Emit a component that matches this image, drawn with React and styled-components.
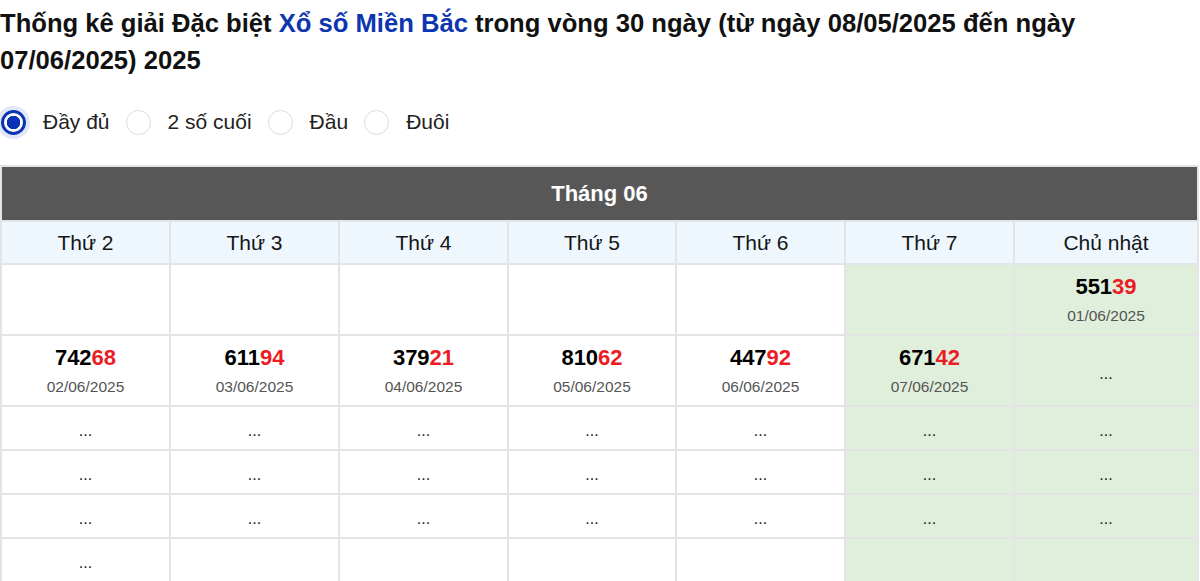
import { useState } from "react";
import styled, { createGlobalStyle } from "styled-components";

const GlobalStyle = createGlobalStyle`
  body {
    margin: 0;
    background: #fff;
    font-family: "Liberation Sans", Arial, sans-serif;
    color: #111;
  }
`;

const modes = ["Đầy đủ", "2 số cuối", "Đầu", "Đuôi"];
const days = ["Thứ 2", "Thứ 3", "Thứ 4", "Thứ 5", "Thứ 6", "Thứ 7", "Chủ nhật"];
const colWidths = [169, 169, 169, 168, 169, 169, null];

// each row: 7 cells, null = empty, "..." = no data, object = result
const rows = [
  [null, null, null, null, null, null, { n: "55139", d: "01/06/2025" }],
  [
    { n: "74268", d: "02/06/2025" },
    { n: "61194", d: "03/06/2025" },
    { n: "37921", d: "04/06/2025" },
    { n: "81062", d: "05/06/2025" },
    { n: "44792", d: "06/06/2025" },
    { n: "67142", d: "07/06/2025" },
    "...",
  ],
  ["...", "...", "...", "...", "...", "...", "..."],
  ["...", "...", "...", "...", "...", "...", "..."],
  ["...", "...", "...", "...", "...", "...", "..."],
  ["...", null, null, null, null, null, null],
];

export default function App() {
  const [mode, setMode] = useState(0);

  return (
    <Page>
      <GlobalStyle />
      <Title>
        Thống kê giải Đặc biệt <TitleLink>Xổ số Miền Bắc</TitleLink> trong vòng 30 ngày (từ ngày
        08/05/2025 đến ngày 07/06/2025) 2025
      </Title>

      <Options>
        {modes.map((m, i) => (
          <Option key={m}>
            <Radio type="radio" name="mode" checked={mode === i} onChange={() => setMode(i)} />
            {m}
          </Option>
        ))}
      </Options>

      <Table>
        <colgroup>
          {days.map((d, i) => (
            <Col key={d} $width={colWidths[i]} />
          ))}
        </colgroup>
        <thead>
          <tr>
            <MonthCell colSpan={7}>Tháng 06</MonthCell>
          </tr>
          <tr>
            {days.map((d) => (
              <DayCell key={d}>{d}</DayCell>
            ))}
          </tr>
        </thead>
        <tbody>
          {rows.map((row, r) => (
            <BodyRow key={r} $tall={r < 2}>
              {row.map((c, i) => (
                <Cell key={i} $weekend={i >= 5}>
                  {c === "..." && <Dots>...</Dots>}
                  {c && c.n && (
                    <>
                      <Number>
                        {c.n.slice(0, 3)}
                        <Tail>{c.n.slice(3)}</Tail>
                      </Number>
                      <DateText>{c.d}</DateText>
                    </>
                  )}
                </Cell>
              ))}
            </BodyRow>
          ))}
        </tbody>
      </Table>
    </Page>
  );
}

const Page = styled.div`
  width: 1200px;
`;

const Title = styled.h2`
  margin: 0;
  padding-top: 5px;
  font-size: 25.6px;
  line-height: 37px;
  font-weight: 700;
  color: #111;
`;

const TitleLink = styled.a`
  color: #0d35b0;
  text-decoration: none;
`;

const Options = styled.div`
  display: flex;
  align-items: center;
  margin-top: 28px;
  height: 30px;
`;

const Option = styled.label`
  display: flex;
  align-items: center;
  gap: 17px;
  margin-right: 15px;
  font-size: 21px;
  color: #222;
`;

const Radio = styled.input`
  appearance: none;
  margin: 0 0 0 1px;
  width: 25px;
  height: 25px;
  border-radius: 50%;
  border: 1px solid #dcdde0;
  background: #fff;
  &:checked {
    border: 3px solid #0b33b5;
    background: radial-gradient(circle, #0b33b5 0 6.5px, #fff 7px);
    box-shadow: 0 0 0 4px rgba(13, 60, 200, 0.12);
  }
`;

const Table = styled.table`
  margin-top: 28px;
  width: 1199px;
  border-collapse: collapse;
  table-layout: fixed;
  text-align: center;
`;

const Col = styled.col`
  width: ${(p) => (p.$width ? `${p.$width}px` : "auto")};
`;

const MonthCell = styled.th`
  background: #575757;
  color: #fff;
  height: 53px;
  padding: 0;
  font-size: 22px;
  font-weight: 700;
  border: 2px solid #e3e4e6;
  border-bottom: 1px solid #e3e4e6;
`;

const DayCell = styled.th`
  background: #eef6fe;
  height: 41px;
  padding: 0;
  font-size: 21px;
  font-weight: 400;
  color: #151515;
  border: 2px solid #e3e4e6;
`;

const BodyRow = styled.tr`
  height: ${(p) => (p.$tall ? "71px" : "44px")};
`;

const Cell = styled.td`
  padding: 0;
  vertical-align: middle;
  border: 2px solid #e3e4e6;
  background: ${(p) => (p.$weekend ? "#e0efdb" : "#fff")};
`;

const Number = styled.div`
  font-size: 22px;
  font-weight: 700;
  line-height: 28px;
  color: #000;
`;

const Tail = styled.span`
  color: #ec1c24;
`;

const DateText = styled.div`
  margin-top: 5px;
  font-size: 15.5px;
  line-height: 20px;
  color: #555;
`;

const Dots = styled.div`
  font-size: 16px;
  line-height: 20px;
  padding-top: 6px;
  color: #222;
`;
